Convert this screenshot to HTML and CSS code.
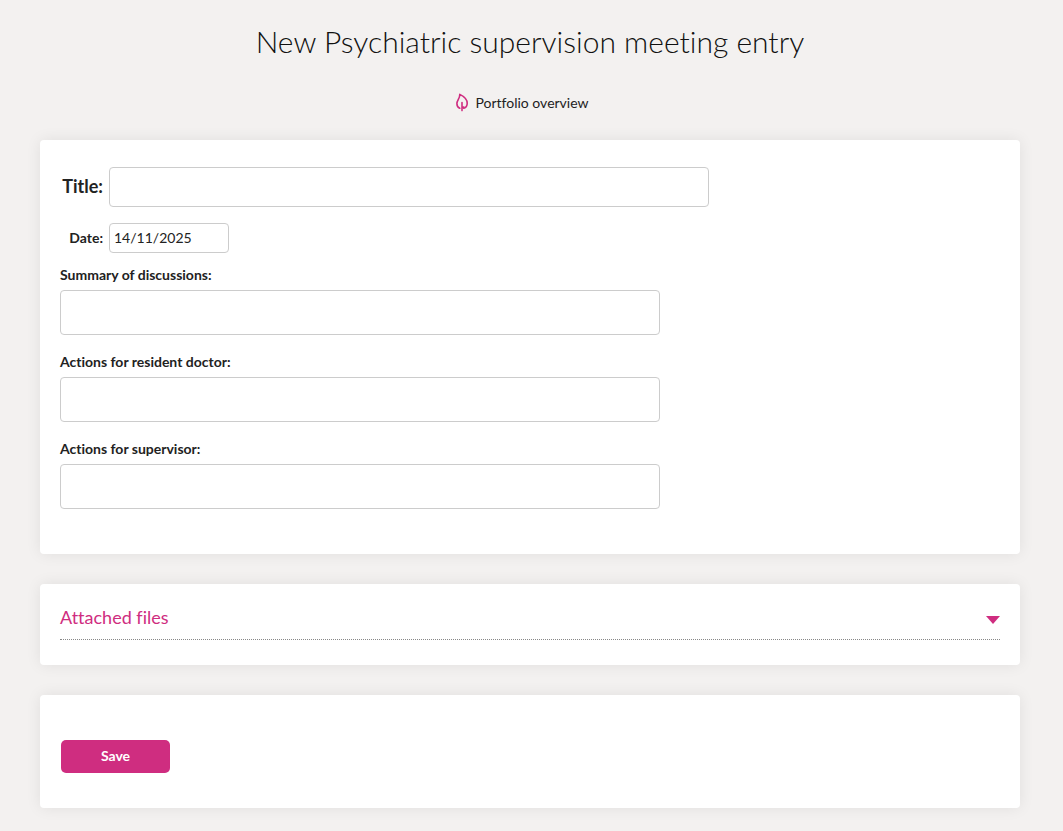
FILE: index.html
```html
<!DOCTYPE html>
<html lang="en">
<head>
  <meta charset="UTF-8">
  <meta name="viewport" content="width=device-width, initial-scale=1.0">
  <title>New Psychiatric supervision meeting entry</title>
  <link rel="stylesheet" href="styles.css">
</head>
<body>
  <main class="page">
    <h1>New Psychiatric supervision meeting entry</h1>

    <nav class="page-links">
      <a href="#">
        <svg class="leaf" viewBox="0 0 14 20" fill="none" stroke="currentColor" stroke-width="1.6" stroke-linecap="round" stroke-linejoin="round">
          <path d="M4.800 15.200C2.800 14.400 1.900 12.600 1.900 10.400C1.900 7.500 5 5.200 4.800 1.400C8.500 3.200 12.200 6.200 12.200 10.200C12.200 12.800 10.800 14.600 8.800 15.200"/>
          <path d="M7 17.600V9.600M7 15l1.800-1"/>
        </svg>
        Portfolio overview
      </a>
    </nav>

    <form>
      <!-- Entry details -->
      <section class="card details">
        <div class="row title-row">
          <label for="title">Title:</label>
          <input type="text" id="title" name="title">
        </div>
        <div class="row date-row">
          <label for="date">Date:</label>
          <input type="text" id="date" name="date" value="14/11/2025">
        </div>
        <div class="field">
          <label for="summary">Summary of discussions:</label>
          <textarea id="summary" name="summary"></textarea>
        </div>
        <div class="field">
          <label for="doctorActions">Actions for resident doctor:</label>
          <textarea id="doctorActions" name="doctorActions"></textarea>
        </div>
        <div class="field">
          <label for="supervisorActions">Actions for supervisor:</label>
          <textarea id="supervisorActions" name="supervisorActions"></textarea>
        </div>
      </section>

      <!-- Attached files -->
      <section class="card files">
        <button type="button" class="section-toggle" aria-expanded="false">
          Attached files
          <svg class="arrow" viewBox="0 0 14 8"><path d="M0 0h14L7 8z" fill="currentColor"/></svg>
        </button>
      </section>

      <!-- Form actions -->
      <section class="card actions">
        <button type="submit" class="save">Save</button>
      </section>
    </form>
  </main>
</body>
</html>
```

FILE: styles.css
```css
* {
  box-sizing: border-box;
}

body {
  margin: 0;
  background: #f3f1f0;
  color: #222;
  font-family: Lato, sans-serif;
  font-size: 14px;
  line-height: 20px;
  font-variant-ligatures: none;
}

.page {
  max-width: 1063px;
  margin: 0 auto;
  padding: 21px 43px 23px 40px;
}

h1 {
  margin: 0;
  color: #111;
  font-size: 30px;
  font-weight: 300;
  line-height: 40px;
  text-align: center;
}

.page-links {
  display: flex;
  justify-content: center;
  margin: 32px 0 27px;
}

.page-links a {
  display: flex;
  align-items: center;
  gap: 6px;
  padding-right: 16px;
  color: #222;
  text-decoration: none;
}

.leaf {
  width: 14px;
  height: 20px;
  color: #cf2d80;
}

.card {
  padding: 20px;
  margin-bottom: 30px;
  background: #fff;
  border-radius: 4px;
  box-shadow: 0 0 15px rgba(0, 0, 0, 0.08);
}

.details {
  padding: 27px 20px 28px;
}

label {
  font-weight: bold;
}

input,
textarea,
button {
  font-family: inherit;
  font-variant-ligatures: inherit;
}

input,
textarea {
  border: 1px solid #ccc;
  border-radius: 4px;
  background: #fff;
  color: #222;
  font-size: 14px;
}

.row {
  display: flex;
  align-items: center;
  gap: 6px;
}

.row label {
  width: 43px;
  text-align: right;
}

.title-row {
  margin-bottom: 16px;
}

.title-row label {
  padding-bottom: 2px;
  font-size: 18px;
}

.title-row input {
  width: 600px;
  height: 40px;
  padding: 4px 8px;
  font-size: 18px;
}

.date-row {
  margin-bottom: 12px;
}

.date-row input {
  width: 120px;
  height: 30px;
  padding: 3px 4px 5px;
}

.field {
  margin-bottom: 17px;
}

.field label {
  display: block;
  margin-bottom: 5px;
}

.field textarea {
  display: block;
  width: 600px;
  max-width: 100%;
  height: 45px;
  padding: 4px;
  resize: none;
}

.files {
  padding-bottom: 25px;
}

.section-toggle {
  display: flex;
  align-items: center;
  justify-content: space-between;
  width: 100%;
  padding: 0 0 9px;
  border: 0;
  border-bottom: 1px dotted #888;
  background: none;
  color: #cf2d80;
  font-size: 18px;
  line-height: 26px;
  cursor: pointer;
}

.arrow {
  width: 14px;
  height: 8px;
  margin-top: 6px;
}

.actions {
  padding: 45px 21px 35px;
  margin-bottom: 0;
}

.save {
  display: block;
  width: 109px;
  height: 33px;
  padding: 0 0 2px;
  border: 0;
  border-radius: 5px;
  background: #cf2d80;
  color: #fff;
  font-size: 14px;
  font-weight: bold;
  cursor: pointer;
}

.save:hover {
  background: #b02369;
}
```
